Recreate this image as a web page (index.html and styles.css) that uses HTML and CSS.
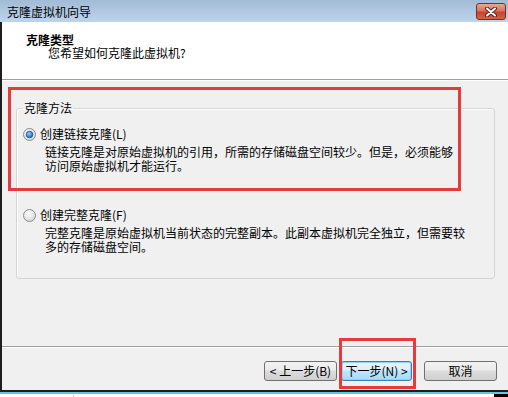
FILE: index.html
```html
<!DOCTYPE html>
<html lang="zh-CN">
<head>
  <meta charset="UTF-8" />
  <title>克隆虚拟机向导</title>
  <link rel="stylesheet" href="styles.css">
</head>
<body>

  <div class="window">
    <div class="titlebar">
      <span class="title">克隆虚拟机向导</span>
      <button class="close" title="关闭">
        <svg width="14" height="10" viewBox="0 0 14 10">
          <path d="M3 1.5 L11 8.5 M11 1.5 L3 8.5" stroke="#5a2418" stroke-width="4" stroke-linecap="round" fill="none"/>
          <path d="M3 1.5 L11 8.5 M11 1.5 L3 8.5" stroke="#fff" stroke-width="2" stroke-linecap="round" fill="none"/>
        </svg>
      </button>
    </div>

    <div class="frame">
      <div class="header">
        <div class="header-title">克隆类型</div>
        <div class="header-sub">您希望如何克隆此虚拟机?</div>
      </div>

      <div class="content">
        <fieldset class="group">
          <legend>克隆方法</legend>

          <div class="option">
            <label class="option-label">
              <svg class="radio" width="13" height="13" viewBox="0 0 13 13">
                <defs>
                  <radialGradient id="rb-bg" cx="40%" cy="35%" r="70%">
                    <stop offset="0" stop-color="#ffffff"/>
                    <stop offset="1" stop-color="#d4d4d4"/>
                  </radialGradient>
                  <radialGradient id="rb-dot" cx="40%" cy="35%" r="70%">
                    <stop offset="0" stop-color="#8fd0ff"/>
                    <stop offset="1" stop-color="#1c5fb0"/>
                  </radialGradient>
                </defs>
                <circle cx="6.5" cy="6.5" r="6" fill="url(#rb-bg)" stroke="#8a8a8a"/>
                <circle cx="6.5" cy="6.5" r="3.3" fill="url(#rb-dot)" stroke="#1b4f8a" stroke-width="0.8"/>
              </svg>
              创建链接克隆(L)
            </label>
            <div class="option-desc">链接克隆是对原始虚拟机的引用，所需的存储磁盘空间较少。但是，必须能够<br>访问原始虚拟机才能运行。</div>
          </div>

          <div class="option option-second">
            <label class="option-label">
              <svg class="radio" width="13" height="13" viewBox="0 0 13 13">
                <circle cx="6.5" cy="6.5" r="6" fill="url(#rb-bg)" stroke="#8a8a8a"/>
              </svg>
              创建完整克隆(F)
            </label>
            <div class="option-desc">完整克隆是原始虚拟机当前状态的完整副本。此副本虚拟机完全独立，但需要较<br>多的存储磁盘空间。</div>
          </div>
        </fieldset>
      </div>

      <div class="footer">
        <button class="btn btn-back">&lt; 上一步(B)</button>
        <button class="btn btn-next">下一步(N) &gt;</button>
        <button class="btn btn-cancel">取消</button>
      </div>
    </div>

    <!-- red highlight marks drawn over the dialog -->
    <div class="mark mark-method"></div>
    <div class="mark mark-next"></div>
  </div>

  <div class="desk">
    <div class="desk-gap"></div>
    <div class="desk-dark"></div>
  </div>

</body>
</html>
```

FILE: styles.css
```css
body {
  margin: 0;
  width: 508px;
  height: 397px;
  overflow: hidden;
  font-family: "Noto Sans CJK SC", "Liberation Sans", sans-serif;
  font-size: 12px;
  color: #000;
  background: #fff;
}

.window {
  position: relative;
  height: 392px;
  display: flex;
  flex-direction: column;
}

.titlebar {
  height: 22px;
  flex: none;
  display: flex;
  justify-content: space-between;
  align-items: flex-start;
  padding: 0 2px 0 7px;
  background: linear-gradient(#a2bbd6, #bdd4eb);
  box-sizing: border-box;
}
.title {
  line-height: 24px;
  color: #000;
}
.close {
  margin-top: 3px;
  width: 30px;
  height: 17px;
  padding: 0;
  border: 1px solid #7a2e20;
  border-radius: 3px;
  background: linear-gradient(#eaa898 0%, #d9725c 45%, #c4452e 55%, #d6604a 100%);
  display: flex;
  align-items: center;
  justify-content: center;
}

.frame {
  flex: 1;
  display: flex;
  flex-direction: column;
  border-left: 2px solid #1e1e1e;
  border-bottom: 2px solid #1e1e1e;
  background: #f0f0f0;
}

.header {
  height: 58px;
  flex: none;
  background: #fff;
  border-bottom: 1px solid #a0a0a0;
  padding: 11px 0 0 24px;
  box-sizing: border-box;
  line-height: 13px;
}
.header-title {
  font-weight: bold;
}
.header-sub {
  padding-left: 22px;
}

.content {
  flex: 1;
  padding-top: 21px;
  box-shadow: inset 0 1px #fff;
}

.group {
  margin: 0 13px 0 14px;
  padding: 12px 6px 24px 6px;
  border: 1px solid #d5d5d5;
  border-radius: 3px;
  box-shadow: inset 1px 1px #fff;
}
.group legend {
  padding: 0 1px;
  line-height: 14px;
}

.option {
  line-height: 14px;
}
.option-second {
  margin-top: 35px;
}
.option-label {
  display: flex;
  align-items: center;
  gap: 4px;
}
.radio {
  flex: none;
}
.option-desc {
  margin-top: 4px;
  padding-left: 22px;
}

.footer {
  height: 44px;
  flex: none;
  box-sizing: border-box;
  border-top: 1px solid #a0a0a0;
  box-shadow: inset 0 1px #fff;
  display: flex;
  justify-content: flex-end;
  align-items: flex-start;
  padding: 14px 11px 0 0;
}
.btn {
  height: 20px;
  padding: 0;
  font-family: inherit;
  font-size: 12px;
  line-height: 18px;
  color: #000;
  border: 1px solid #707070;
  border-radius: 3px;
  background: linear-gradient(#f2f2f2 0%, #ebebeb 45%, #dddddd 50%, #cfcfcf 100%);
  box-sizing: border-box;
}
.btn-back {
  width: 73px;
  margin-right: 4px;
}
.btn-next {
  width: 71px;
  margin-right: 12px;
  border-color: #3c7fb1;
  background: linear-gradient(#eaf6fd 0%, #d9f0fc 45%, #bee6fd 50%, #a7d9f5 100%);
  box-shadow: inset 0 0 0 1px #8fd3f5;
}
.btn-cancel {
  width: 73px;
}

.mark {
  position: absolute;
  border: 3px solid #e53a3e;
  box-sizing: border-box;
}
.mark-method {
  left: 8px;
  top: 87px;
  width: 453px;
  height: 104px;
}
.mark-next {
  left: 339px;
  top: 338px;
  width: 77px;
  height: 51px;
}

.desk {
  height: 5px;
  border-top: 2px solid #5cc8e8;
  box-sizing: border-box;
  display: flex;
}
.desk-gap {
  width: 73px;
  border-right: 1px solid #d8d8d8;
}
.desk-dark {
  margin-left: auto;
  width: 14px;
  background: #000;
}
```
